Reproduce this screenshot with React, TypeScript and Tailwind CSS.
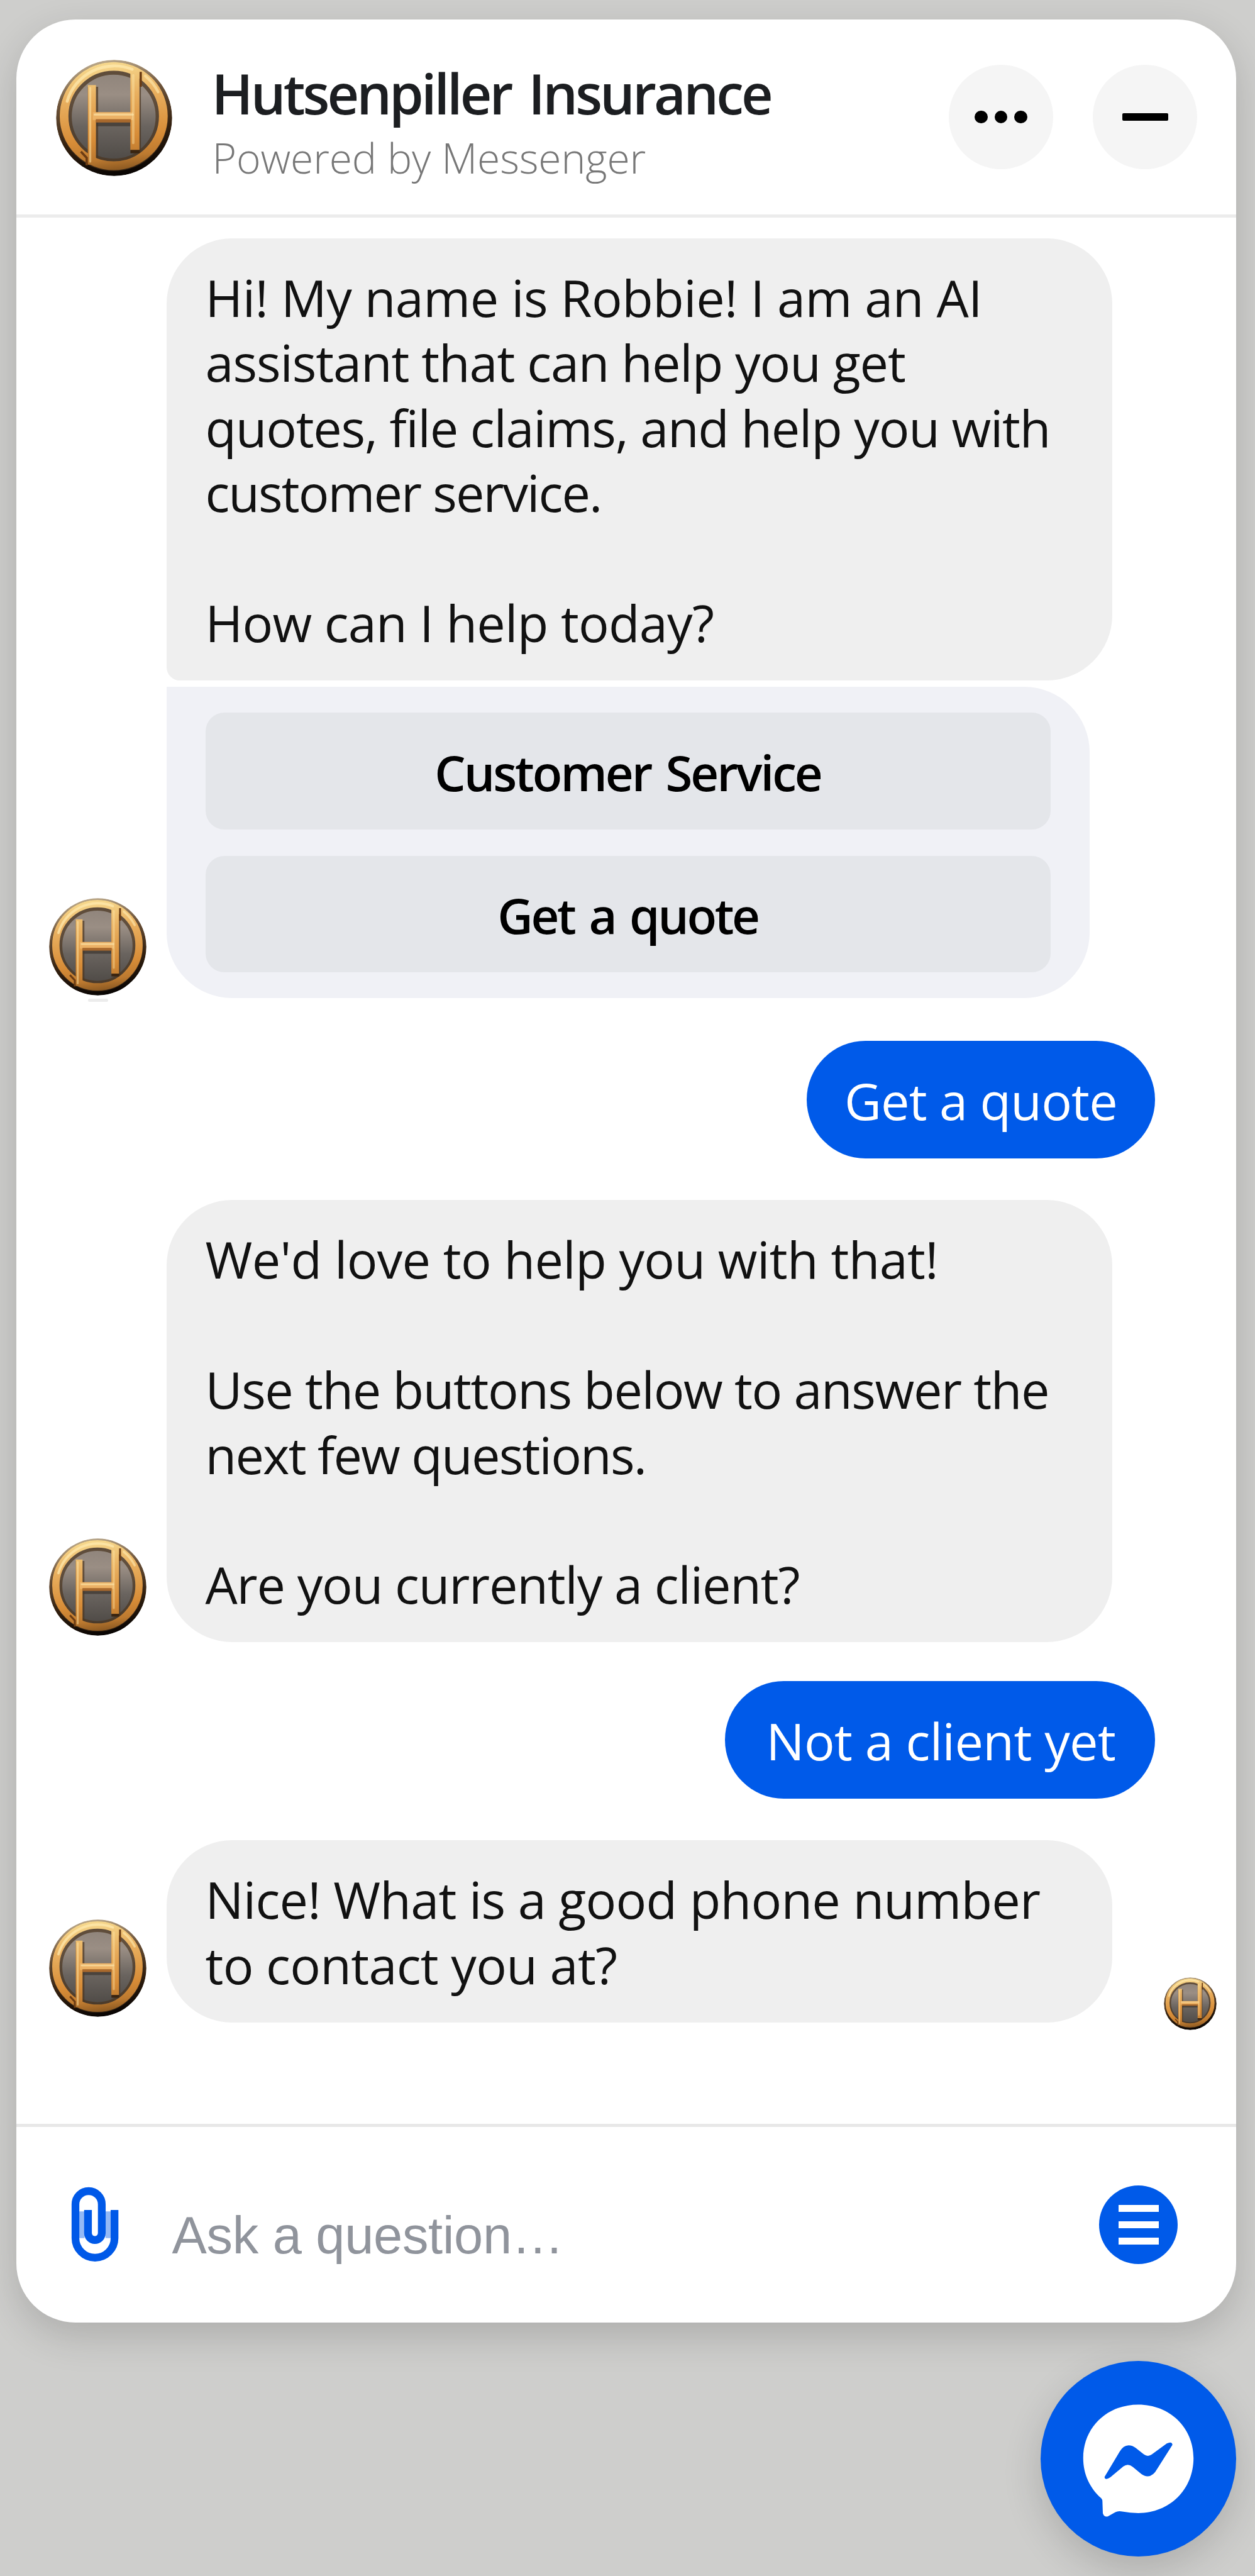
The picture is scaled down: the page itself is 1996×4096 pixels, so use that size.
import { useId } from "react"
import clsx from "clsx"

interface Line {
  text: string;
  tracking?: string;
}

const greeting: Line[] = [
  { text: "Hi! My name is Robbie! I am an AI", tracking: "tracking-[-0.55px]" },
  { text: "assistant that can help you get", tracking: "tracking-[-1.1px]" },
  { text: "quotes, file claims, and help you with", tracking: "tracking-[-1.25px]" },
  { text: "customer service.", tracking: "tracking-[-1.95px]" },
  { text: "" },
  { text: "How can I help today?", tracking: "tracking-[-0.75px]" },
]

const clientQuestion: Line[] = [
  { text: "We'd love to help you with that!", tracking: "tracking-[-0.65px]" },
  { text: "" },
  { text: "Use the buttons below to answer the", tracking: "tracking-[-1.4px]" },
  { text: "next few questions.", tracking: "tracking-[-1.8px]" },
  { text: "" },
  { text: "Are you currently a client?", tracking: "tracking-[-1.17px]" },
]

const phoneQuestion: Line[] = [
  { text: "Nice! What is a good phone number", tracking: "tracking-[-0.74px]" },
  { text: "to contact you at?", tracking: "tracking-[-0.69px]" },
]

function Logo({ className }: { className?: string }) {
  const id = useId()
  const gold = `${id}-gold`
  const rim = `${id}-rim`
  const face = `${id}-face`

  return (
    <svg viewBox="28 40 560 560" className={clsx("block shrink-0 rounded-full", className)}>
      <defs>
        <linearGradient id={gold} gradientUnits="userSpaceOnUse" x1="270" y1="60" x2="330" y2="570">
          <stop offset="0" stopColor="#f6d78c" />
          <stop offset="0.3" stopColor="#e9b060" />
          <stop offset="0.7" stopColor="#d78c37" />
          <stop offset="0.88" stopColor="#bd7a30" />
          <stop offset="1" stopColor="#8d5a22" />
        </linearGradient>
        <linearGradient id={rim} x1="0.4" y1="0" x2="0.6" y2="1">
          <stop offset="0" stopColor="#bba98c" />
          <stop offset="0.3" stopColor="#6e543a" />
          <stop offset="0.65" stopColor="#33200f" />
          <stop offset="1" stopColor="#060302" />
        </linearGradient>
        <linearGradient id={face} x1="0.5" y1="0" x2="0.5" y2="1">
          <stop offset="0" stopColor="#8d8279" />
          <stop offset="0.28" stopColor="#9a8e84" />
          <stop offset="0.6" stopColor="#6a645f" />
          <stop offset="1" stopColor="#4b4743" />
        </linearGradient>
      </defs>
      <circle cx="308" cy="320" r="279" fill={`url(#${rim})`} />
      <circle cx="306" cy="312" r="236" fill={`url(#${face})`} />

      {/* sombra do relevo */}
      <g fill="none" stroke="#4a3420" strokeOpacity="0.7">
        <circle cx="306" cy="314" r="232" strokeWidth="60" />
        <path d="M206 170V545M412 110V488" strokeWidth="50" />
        <path d="M222 334H388" strokeWidth="52" stroke="#3c342d" />
      </g>

      <g fill="none" stroke={`url(#${gold})`}>
        <circle cx="306" cy="311" r="239" strokeWidth="42" />
        <path d="M201 162V545" strokeWidth="39" />
        <path d="M408 88V474" strokeWidth="44" />
      </g>
      <rect x="205" y="292" width="195" height="38" fill="#ecb266" />
      <rect x="220" y="326" width="168" height="16" fill="#a9692d" />

      {/* brilho */}
      <g fill="none" stroke="#ffebb0" strokeLinecap="round">
        <path d="M82 240A236 236 0 0 1 395 86" strokeWidth="14" strokeOpacity="0.7" />
        <path d="M458 118A244 244 0 0 1 520 195" strokeWidth="13" strokeOpacity="0.6" />
        <path d="M193 176V530" strokeWidth="10" strokeOpacity="0.5" />
        <path d="M400 115V440" strokeWidth="12" strokeOpacity="0.4" />
        <path d="M215 304H398" strokeWidth="10" strokeOpacity="0.6" />
      </g>
      <g fill="none" stroke="#6b3c14">
        <path d="M436 98V170" strokeWidth="11" />
        <path d="M148 482L176 512V548" strokeWidth="11" />
        <path d="M387 482H431" strokeWidth="16" stroke="#3a2410" />
      </g>
    </svg>
  )
}

function Bubble({ lines, className }: { lines: Line[]; className?: string }) {
  return (
    <div
      className={clsx(
        "w-[1504px] rounded-[104px] bg-[#efefef] pt-[42px] pb-[40.6px] pl-[62px] text-[81px] leading-[103.4px] text-[#111]",
        className
      )}
    >
      {lines.map((line, idx) => (
        <p key={idx} className={clsx("h-[103.4px] whitespace-nowrap", line.tracking)}>
          {line.text}
        </p>
      ))}
    </div>
  )
}

function Reply({ text, className }: { text: string; className: string }) {
  return (
    <div
      className={clsx(
        "mr-[129px] self-end rounded-full bg-[#005ae9] pt-[43px] pb-[40.6px] text-[81px] leading-[103.4px] whitespace-nowrap text-white",
        className
      )}
    >
      {text}
    </div>
  )
}

function ReplyOption({ text, className }: { text: string; className: string }) {
  return (
    <button
      className={clsx(
        "h-[185.5px] w-full rounded-[30px] bg-[#e4e6ea] pt-[3px] text-center text-[78px] leading-[100px] font-semibold text-black [word-spacing:6px]",
        className
      )}
    >
      {text}
    </button>
  )
}

export default function App() {
  return (
    <div className="flex h-[4096px] w-[1996px] flex-col overflow-hidden bg-[#cececc] pt-[31px] pl-[26px] font-['Open_Sans',sans-serif]">
      <div className="flex h-[3662px] w-[1940px] shrink-0 flex-col rounded-[94px] bg-white shadow-[0_21px_62px_rgba(0,0,0,0.16)]">
        {/* Cabeçalho */}
        <header className="flex h-[315px] shrink-0 items-center border-b-[5px] border-[#ececec] pr-[62px] pl-[62.5px]">
          <Logo className="mt-[2px] size-[185px]" />
          <div className="ml-[63px] pt-[14px] whitespace-nowrap">
            <h1 className="text-[88px] leading-[113px] font-semibold tracking-[-3.95px] text-[#1c1e21] [word-spacing:9px]">
              Hutsenpiller Insurance
            </h1>
            <p className="pl-[1px] text-[66px] leading-[90px] font-light tracking-[-0.15px] text-[#777]">
              Powered by Messenger
            </p>
          </div>
          <div className="ml-auto flex gap-[63px]">
            <button className="flex size-[166px] items-center justify-center gap-[11px] rounded-full bg-[#f5f5f5]">
              <span className="size-[20.5px] rounded-full bg-black" />
              <span className="size-[20.5px] rounded-full bg-black" />
              <span className="size-[20.5px] rounded-full bg-black" />
            </button>
            <button className="flex size-[166px] items-center justify-center rounded-full bg-[#f5f5f5]">
              <span className="h-[12px] w-[73px] rounded-[2px] bg-black" />
            </button>
          </div>
        </header>

        {/* Conversa */}
        <main className="flex grow flex-col pt-[33px]">
          <div className="flex items-end pl-[52px]">
            <div className="relative mr-[31.5px] mb-[4px]">
              <Logo className="size-[155px]" />
              <span className="absolute top-[160px] left-[62px] h-[5px] w-[32px] rounded-full bg-[#ececec]" />
            </div>
            <div className="flex flex-col gap-[10.4px]">
              <Bubble lines={greeting} className="rounded-bl-[21px]" />
              <div className="flex h-[495px] w-[1468px] flex-col gap-[42px] rounded-[104px] rounded-tl-none bg-[#f0f1f6] px-[62px] pt-[41px]">
                <ReplyOption text="Customer Service" className="tracking-[-3.05px]" />
                <ReplyOption text="Get a quote" className="tracking-[-3.4px]" />
              </div>
            </div>
          </div>

          <Reply text="Get a quote" className="mt-[67.5px] w-[554.5px] pl-[60.5px] tracking-[-0.8px]" />

          <div className="mt-[66.5px] flex items-end pl-[52px]">
            <Logo className="mr-[31.5px] mb-[10px] size-[155px]" />
            <Bubble lines={clientQuestion} />
          </div>

          <Reply text="Not a client yet" className="mt-[61.5px] w-[684px] pl-[65.5px] tracking-[-0.6px]" />

          <div className="mt-[66.5px] flex items-end pl-[52px]">
            <Logo className="mr-[31.5px] mb-[9px] size-[155px]" />
            <Bubble lines={phoneQuestion} />
            <Logo className="-mb-[12px] ml-[82px] size-[84px]" />
          </div>
        </main>

        {/* Campo de mensagem */}
        <footer className="flex h-[316px] shrink-0 items-center border-t-[5px] border-[#e8e8e8] pr-[93px] pl-[86px]">
          <svg viewBox="66 66 236 376" className="h-[125px] w-[78.5px] shrink-0" fill="none" stroke="#0059e8">
            <path d="M120 190V318M247 190V318" strokeWidth="26" strokeOpacity="0.42" />
            <path
              d="M277 183V318A93.5 93.5 0 0 1 90 318V156A63 63 0 0 1 216 156V294A33 33 0 0 1 150 294V183"
              strokeWidth="37"
            />
          </svg>
          <span className="mt-[34px] ml-[83px] font-['Liberation_Sans',Arial,sans-serif] text-[83px] leading-[100px] tracking-[-0.3px] whitespace-nowrap text-[#90949c]">
            Ask a question…
          </span>
          <button className="ml-auto flex size-[125px] flex-col items-center justify-center gap-[15px] rounded-full bg-[#005ae9]">
            <span className="h-[11px] w-[64px] bg-white" />
            <span className="h-[11px] w-[64px] bg-white" />
            <span className="h-[11px] w-[64px] bg-white" />
          </button>
        </footer>
      </div>

      <button className="mt-[60.5px] mr-[30px] size-[311px] shrink-0 self-end rounded-full bg-[#005ae9] shadow-[0_21px_62px_rgba(0,0,0,0.16)]">
        <svg viewBox="-96 -117 936 936" className="size-full">
          <path
            fill="#fff"
            d="M372 92C224 92 108 200 108 348C108 425 140 492 194 540Q200 546 200 556L202 612Q208 632 226 627L262 607Q278 600 295 604Q332 611 372 611C520 611 636 500 636 348C636 200 520 92 372 92Z"
          />
          <path
            fill="#005ae9"
            d="M210 438L282 318Q300 287 325 287Q344 287 360 300L398 330Q417 344 436 331L508 278Q534 266 535 285L462 400Q443 435 417 435Q400 435 386 424L345 390Q322 372 300 388L238 440Q212 457 210 438Z"
          />
        </svg>
      </button>
    </div>
  )
}
